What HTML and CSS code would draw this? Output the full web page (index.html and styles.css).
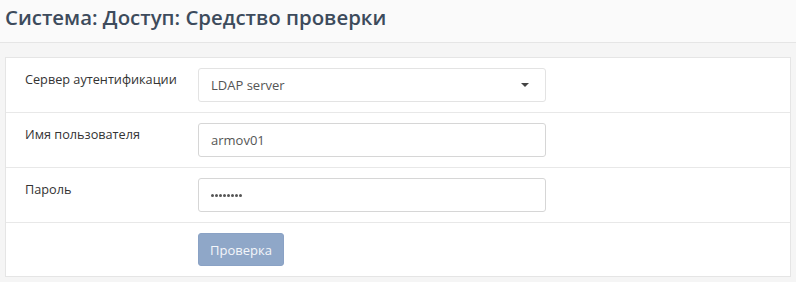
FILE: index.html
```html
<!DOCTYPE html>
<html lang="ru">
<head>
<meta charset="utf-8">
<title>Система: Доступ: Средство проверки</title>
<link rel="stylesheet" href="styles.css">
</head>
<body>
<header class="page-head">
  <h1 class="page-title">Система: Доступ: Средство проверки</h1>
</header>
<main class="content">
  <section class="card">
    <div class="row">
      <div class="label">Сервер аутентификации</div>
      <div class="field">
        <div class="select">
          <span class="value">LDAP server</span>
          <span class="caret"></span>
        </div>
      </div>
    </div>
    <div class="row">
      <div class="label">Имя пользователя</div>
      <div class="field">
        <div class="input"><span class="value">armov01</span></div>
      </div>
    </div>
    <div class="row">
      <div class="label">Пароль</div>
      <div class="field">
        <div class="input"><span class="dots"><i></i><i></i><i></i><i></i><i></i><i></i><i></i><i></i></span></div>
      </div>
    </div>
    <div class="row">
      <div class="label"></div>
      <div class="field">
        <button class="btn" type="button">Проверка</button>
      </div>
    </div>
  </section>
</main>
</body>
</html>
```

FILE: styles.css
```css
* { box-sizing: border-box; }
html, body { margin: 0; padding: 0; }
body {
  background: #f5f5f5;
  font-family: "Open Sans", "Noto Sans", sans-serif;
  color: #333;
  width: 796px;
  height: 282px;
  overflow: hidden;
}
.page-head {
  background: #fafafa;
  height: 43px;
  border-bottom: 1px solid #e5e5e5;
  padding: 0 5px;
}
.page-title {
  margin: 0;
  font-size: 20.4px;
  font-weight: 600;
  line-height: 35px;
  color: #3d4b5c;
}
.content {
  padding: 14px 5px 0;
}
.card {
  background: #fff;
  border: 1px solid #e5e5e5;
}
.row {
  display: grid;
  grid-template-columns: 173px 348px;
  padding: 10px 0 10px 19px;
  border-top: 1px solid #e8e8e8;
}
.row:first-child { border-top: 0; }
.label {
  font-size: 12.7px;
  line-height: 20px;
  color: #333;
  padding-top: 1px;
}
.select, .input {
  height: 34px;
  border: 1px solid #d6d6d6;
  border-radius: 3px;
  display: flex;
  align-items: center;
  padding: 0 12px;
  font-size: 13px;
  color: #555;
}
.select { justify-content: space-between; border-color: #e3e3e3; }
.caret {
  width: 0; height: 0;
  border-left: 4px solid transparent;
  border-right: 4px solid transparent;
  border-top: 4px solid #444;
  margin-right: 4px;
}
.dots { display: flex; gap: 1px; padding-top: 1px; }
.dots i {
  display: block;
  width: 3px; height: 3px;
  border-radius: 50%;
  background: #555;
}
.btn {
  height: 33px;
  padding: 0 11px;
  border: 1px solid #8aa2c5;
  border-radius: 3px;
  background: #8fa7c8;
  color: #f4f6fa;
  font-family: inherit;
  font-size: 13px;
  cursor: not-allowed;
}
```
